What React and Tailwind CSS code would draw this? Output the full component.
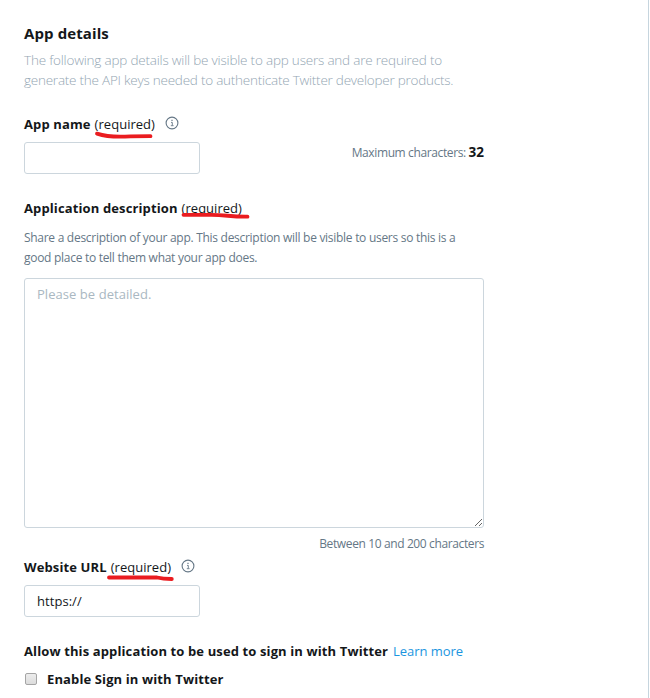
import React from "react";

function InfoIcon() {
  return (
    <svg className="-mt-[3px] ml-[9.6px] block h-[14px] w-[14px] shrink-0" viewBox="0 0 14 14" fill="none" stroke="#657786">
      <circle cx="7" cy="7" r="5.9" strokeWidth="1.1" />
      <path d="M6 6.4h1.3v3M5.8 9.7h2.8" strokeWidth="0.9" />
      <path d="M6.4 4.3h1.2" strokeWidth="1.2" />
    </svg>
  );
}

function Marker({ d, className }) {
  return (
    <svg className={`absolute overflow-visible ${className}`} width="70" height="8" fill="none">
      <path d={d} stroke="#ea1c20" strokeWidth="3.8" strokeLinecap="round" strokeLinejoin="round" />
    </svg>
  );
}

function Label({ children, marker, markerClass }) {
  return (
    <>
      <span className="font-bold tracking-[0.12px]">{children}</span>
      <span className="relative ml-1 tracking-[0.03px]">
        (required)
        <Marker d={marker} className={markerClass} />
      </span>
    </>
  );
}

export default function App() {
  return (
    <div className="h-[698px] w-[649px] overflow-hidden whitespace-nowrap border-r border-[#c6d5de] bg-white pl-6 font-['Open_Sans','Noto_Sans',sans-serif] text-[13px] leading-5 text-[#14171a]">
      <div className="w-[460px]">
        <h1 className="pt-[23px] text-[15px] font-bold leading-5 tracking-[0.1px]">
          <span>App details</span>
        </h1>
        <div className="mt-[7px] text-[13.5px] font-light tracking-[-0.2px] text-[#94a6b3]">
          <div><span>The following app details will be visible to app users and are required to</span></div>
          <div className="tracking-[-0.235px]"><span>generate the API keys needed to authenticate Twitter developer products.</span></div>
        </div>

        <div className="mt-6 flex h-5 items-center">
          <Label marker="M2 1.6C11 4.5 20 5 30 4.6S45 4.2 55.5 4.2" markerClass="left-0 top-[18px]">App name</Label>
          <InfoIcon />
        </div>
        <div className="mt-2 flex h-8 items-start justify-between">
          <input className="h-8 w-[176px] rounded-[3px] border border-[#ccd6dd] px-3 outline-none" />
          <div className="text-[12px] tracking-[-0.38px] text-[#657786]">
            <span>Maximum characters:</span> <b className="text-[13.5px] tracking-normal text-[#14171a]">32</b>
          </div>
        </div>

        <div className="mt-6 flex h-5 items-center">
          <Label marker="M1.5 2.8H28C44 2.6 48 5 65.5 4.7" markerClass="left-0 top-[14px]">Application description</Label>
        </div>
        <div className="mt-[9px] pt-px text-[12px] tracking-[-0.285px] text-[#657786]">
          <div><span>Share a description of your app. This description will be visible to users so this is a</span></div>
          <div><span>good place to tell them what your app does.</span></div>
        </div>
        <textarea
          placeholder="Please be detailed."
          className="mt-[10px] block h-[250px] w-[460px] resize rounded-[3px] border border-[#ccd6dd] px-3 py-[5px] tracking-[0.05px] outline-none placeholder:text-[#aab8c2]"
        />
        <div className="mt-[6px] text-right text-[12px] tracking-[-0.38px] text-[#657786]">
          <span>Between 10 and 200 characters</span>
        </div>

        <div className="mt-[3px] flex h-5 items-center">
          <Label marker="M-2 2.5H46C52 4 58 4 60.8 4" markerClass="left-0 top-[18px]">Website URL</Label>
          <InfoIcon />
        </div>
        <input
          defaultValue="https://"
          className="mt-2 block h-8 w-[176px] rounded-[3px] border border-[#ccd6dd] px-3 tracking-[0.05px] outline-none"
        />

        <div className="mt-6">
          <span className="font-bold tracking-[0.12px]">Allow this application to be used to sign in with Twitter</span>
          <a className="ml-[5px] tracking-[-0.05px] text-[#1b95e0]">Learn more</a>
        </div>
        <label className="mt-2 flex h-5 items-center">
          <input
            type="checkbox"
            className="ml-px h-3 w-3 appearance-none rounded-[2px] border border-[#a5a5a5] bg-linear-to-b from-[#ededed] to-[#dcdcdc]"
          />
          <span className="ml-[10px] font-bold tracking-[0.12px]">Enable Sign in with Twitter</span>
        </label>
      </div>
    </div>
  );
}
